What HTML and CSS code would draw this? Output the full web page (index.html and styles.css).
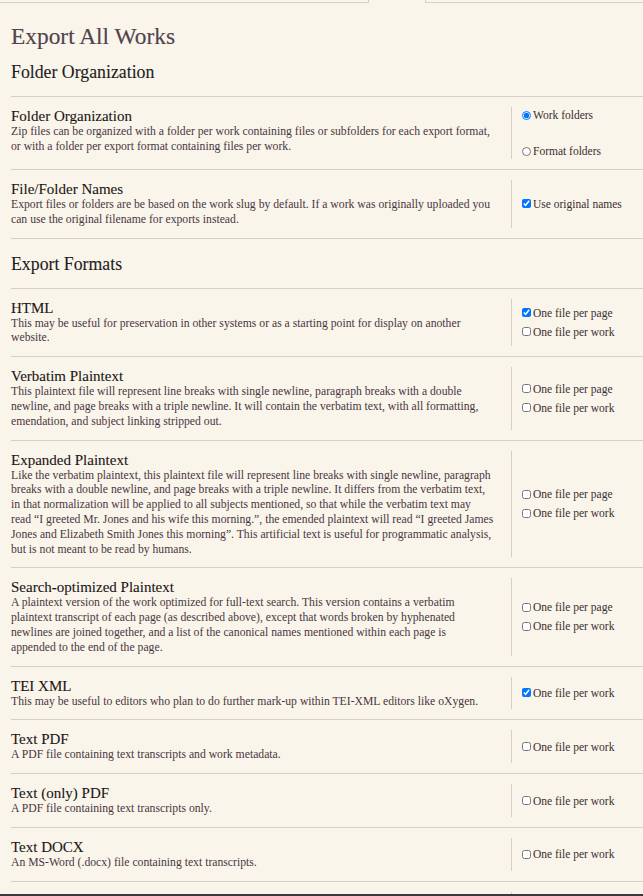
FILE: index.html
```html
<!DOCTYPE html>
<html lang="en">
<head>
<meta charset="utf-8">
<title>Export All Works</title>
<link rel="stylesheet" href="styles.css">
</head>
<body>
<div class="tabs">
  <div class="tab-rest tab-left"></div>
  <div class="tab-active"></div>
  <div class="tab-rest tab-right"></div>
</div>
<main class="page">
  <h1 class="page-title">Export All Works</h1>

  <h2 class="section-title">Folder Organization</h2>
  <div class="rows">
    <div class="row">
      <div class="info">
        <h3 class="row-title">Folder Organization</h3>
        <p class="row-desc">Zip files can be organized with a folder per work containing files or subfolders for each export format,<br>or with a folder per export format containing files per work.</p>
      </div>
      <div class="opts opts-top">
        <label class="opt"><input type="radio" name="org" checked>Work folders</label>
        <label class="opt"><input type="radio" name="org">Format folders</label>
      </div>
    </div>
    <div class="row">
      <div class="info">
        <h3 class="row-title">File/Folder Names</h3>
        <p class="row-desc">Export files or folders are be based on the work slug by default. If a work was originally uploaded you<br>can use the original filename for exports instead.</p>
      </div>
      <div class="opts">
        <label class="opt"><input type="checkbox" checked>Use original names</label>
      </div>
    </div>
  </div>

  <h2 class="section-title section-gap">Export Formats</h2>
  <div class="rows">
    <div class="row">
      <div class="info">
        <h3 class="row-title">HTML</h3>
        <p class="row-desc">This may be useful for preservation in other systems or as a starting point for display on another<br>website.</p>
      </div>
      <div class="opts">
        <label class="opt"><input type="checkbox" checked>One file per page</label>
        <label class="opt"><input type="checkbox">One file per work</label>
      </div>
    </div>
    <div class="row">
      <div class="info">
        <h3 class="row-title">Verbatim Plaintext</h3>
        <p class="row-desc">This plaintext file will represent line breaks with single newline, paragraph breaks with a double<br>newline, and page breaks with a triple newline. It will contain the verbatim text, with all formatting,<br>emendation, and subject linking stripped out.</p>
      </div>
      <div class="opts">
        <label class="opt"><input type="checkbox">One file per page</label>
        <label class="opt"><input type="checkbox">One file per work</label>
      </div>
    </div>
    <div class="row">
      <div class="info">
        <h3 class="row-title">Expanded Plaintext</h3>
        <p class="row-desc">Like the verbatim plaintext, this plaintext file will represent line breaks with single newline, paragraph<br>breaks with a double newline, and page breaks with a triple newline. It differs from the verbatim text,<br>in that normalization will be applied to all subjects mentioned, so that while the verbatim text may<br>read “I greeted Mr. Jones and his wife this morning.”, the emended plaintext will read “I greeted James<br>Jones and Elizabeth Smith Jones this morning”. This artificial text is useful for programmatic analysis,<br>but is not meant to be read by humans.</p>
      </div>
      <div class="opts">
        <label class="opt"><input type="checkbox">One file per page</label>
        <label class="opt"><input type="checkbox">One file per work</label>
      </div>
    </div>
    <div class="row">
      <div class="info">
        <h3 class="row-title">Search-optimized Plaintext</h3>
        <p class="row-desc">A plaintext version of the work optimized for full-text search. This version contains a verbatim<br>plaintext transcript of each page (as described above), except that words broken by hyphenated<br>newlines are joined together, and a list of the canonical names mentioned within each page is<br>appended to the end of the page.</p>
      </div>
      <div class="opts">
        <label class="opt"><input type="checkbox">One file per page</label>
        <label class="opt"><input type="checkbox">One file per work</label>
      </div>
    </div>
    <div class="row">
      <div class="info">
        <h3 class="row-title">TEI XML</h3>
        <p class="row-desc">This may be useful to editors who plan to do further mark-up within TEI-XML editors like oXygen.</p>
      </div>
      <div class="opts">
        <label class="opt"><input type="checkbox" checked>One file per work</label>
      </div>
    </div>
    <div class="row">
      <div class="info">
        <h3 class="row-title">Text PDF</h3>
        <p class="row-desc">A PDF file containing text transcripts and work metadata.</p>
      </div>
      <div class="opts">
        <label class="opt"><input type="checkbox">One file per work</label>
      </div>
    </div>
    <div class="row">
      <div class="info">
        <h3 class="row-title">Text (only) PDF</h3>
        <p class="row-desc">A PDF file containing text transcripts only.</p>
      </div>
      <div class="opts">
        <label class="opt"><input type="checkbox">One file per work</label>
      </div>
    </div>
    <div class="row">
      <div class="info">
        <h3 class="row-title">Text DOCX</h3>
        <p class="row-desc">An MS-Word (.docx) file containing text transcripts.</p>
      </div>
      <div class="opts">
        <label class="opt"><input type="checkbox">One file per work</label>
      </div>
    </div>
    <div class="row">
      <div class="info">
        <h3 class="row-title">Facing Edition PDF</h3>
        <p class="row-desc">A PDF file containing page images facing their text transcripts.</p>
      </div>
      <div class="opts">
        <label class="opt"><input type="checkbox">One file per work</label>
      </div>
    </div>
  </div>
</main>
<div class="bottom-bar"></div>
</body>
</html>
```
FILE: styles.css
```css
html, body {
  margin: 0;
  padding: 0;
  background: #f9f5eb;
}
body {
  font-family: "Liberation Serif", "Times New Roman", serif;
  color: #2a2222;
  overflow: hidden;
  height: 896px;
}
.tabs {
  display: flex;
  height: 3px;
}
.tab-rest {
  border-bottom: 1px solid #d6d0c4;
}
.tab-left {
  width: 368px;
  border-right: 1px solid #d6d0c4;
}
.tab-active {
  width: 56px;
}
.tab-right {
  flex: 1;
  border-left: 1px solid #d6d0c4;
}
.page {
  padding-left: 11px;
}
.page-title {
  margin: 20px 0 0;
  font-size: 23.4px;
  line-height: 26px;
  font-weight: normal;
  color: #52434b;
  -webkit-text-stroke: 0.15px #52434b;
}
.section-title {
  margin: 13px 0 0;
  padding-bottom: 14px;
  border-bottom: 1px solid #d6d0c4;
  font-size: 17.8px;
  line-height: 20px;
  font-weight: normal;
  color: #231c1c;
  -webkit-text-stroke: 0.1px #231c1c;
}
.section-gap {
  margin-top: 15px;
}
.row {
  display: grid;
  grid-template-columns: 1fr 132px;
  padding: 10px 0;
  border-bottom: 1px solid #d6d0c4;
}
.info {
  padding-right: 8px;
  white-space: nowrap;
}
.row-title {
  margin: 0;
  font-size: 15px;
  line-height: 18px;
  font-weight: normal;
  color: #1c1515;
  -webkit-text-stroke: 0.1px #1c1515;
}
.row-desc {
  margin: 0;
  font-size: 11.7px;
  line-height: 14.8px;
  color: #4a3641;
}
.opts {
  border-left: 1px solid #d6d0c4;
  padding-left: 10px;
  display: flex;
  flex-direction: column;
  justify-content: center;
  gap: 3px;
}
.opts-top {
  justify-content: flex-start;
  gap: 20px;
}
.opt {
  display: flex;
  align-items: center;
  font-size: 11.5px;
  line-height: 16px;
  color: #3a2e30;
}
.opt input {
  width: 9px;
  height: 9px;
  margin: 0 2px 0 0;
  accent-color: #0075ff;
}
.bottom-bar {
  position: fixed;
  left: 0;
  right: 0;
  bottom: 0;
  height: 2px;
  background: #3a3a3a;
}
```
